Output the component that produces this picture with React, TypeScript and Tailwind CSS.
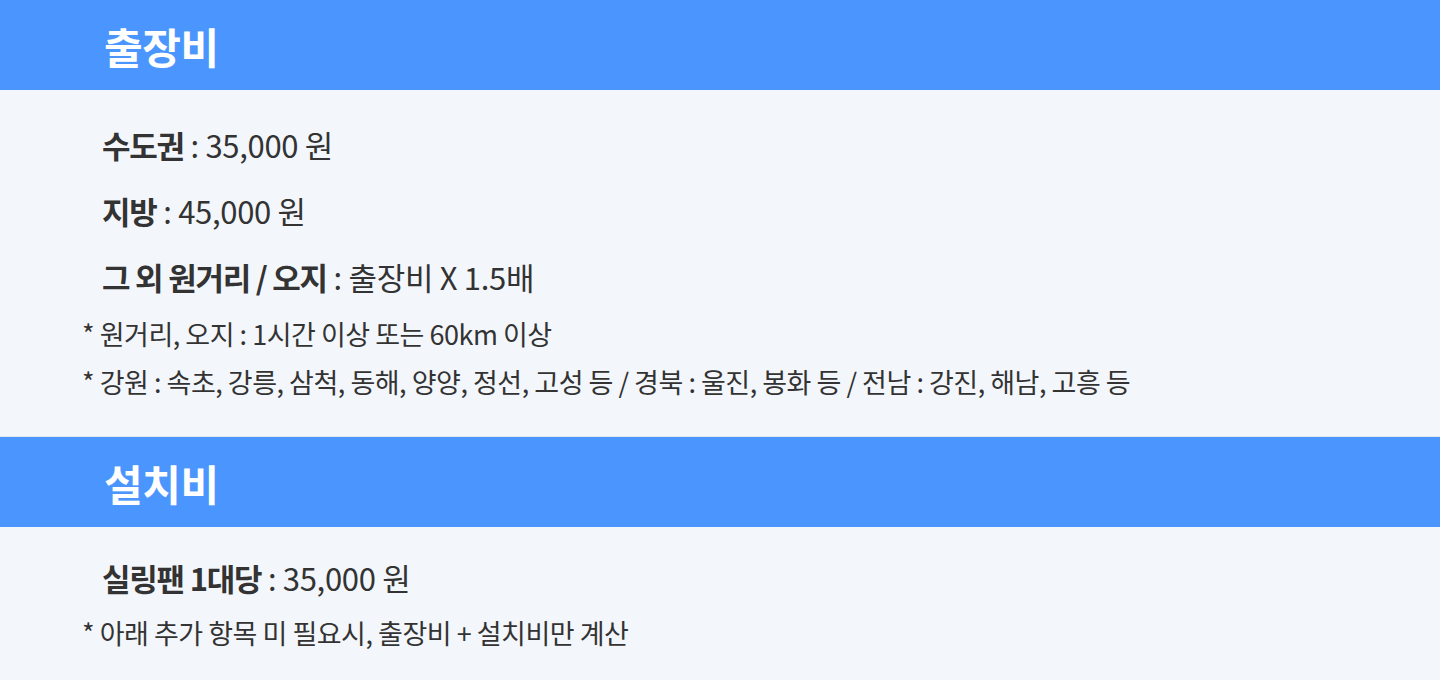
const FONT = "font-['Noto_Sans_CJK_KR','Noto_Sans',sans-serif]"

function Header({ title }: { title: string }) {
  return (
    <div className="flex h-[90px] items-center bg-[#4a96fe] pl-[104px]">
      <h2 className="text-[42px] font-bold tracking-[-0.01em] text-white">{title}</h2>
    </div>
  )
}

function Row({ label, value }: { label: string; value: string }) {
  return (
    <div className="flex h-[66px] items-center pl-[102px] text-[31px] tracking-[-0.01em] text-[#333]">
      <span className="font-bold tracking-[-0.04em]">{label}</span>
      <span>&nbsp;: {value}</span>
    </div>
  )
}

function Note({ children }: { children: string }) {
  return (
    <div className="flex h-[48px] items-center pl-[82px] text-[27px] tracking-[-0.018em] text-[#333]">
      {children}
    </div>
  )
}

export default function App() {
  return (
    <div className={`${FONT} w-[1440px] h-[680px] bg-[#f3f7fc] overflow-hidden`}>
      <Header title="출장비" />
      <div className="pt-[22px] pb-[30px] border-b border-[#e3e8ef]">
        <Row label="수도권" value="35,000 원" />
        <Row label="지방" value="45,000 원" />
        <Row label="그 외 원거리 / 오지" value="출장비 X 1.5배" />
        <Note>* 원거리, 오지 : 1시간 이상 또는 60km 이상</Note>
        <Note>* 강원 : 속초, 강릉, 삼척, 동해, 양양, 정선, 고성 등 / 경북 : 울진, 봉화 등 / 전남 : 강진, 해남, 고흥 등</Note>
      </div>
      <Header title="설치비" />
      <div className="pt-[18px]">
        <Row label="실링팬 1대당" value="35,000 원" />
        <div className="-mt-[2px]">
          <Note>* 아래 추가 항목 미 필요시, 출장비 + 설치비만 계산</Note>
        </div>
      </div>
    </div>
  )
}
